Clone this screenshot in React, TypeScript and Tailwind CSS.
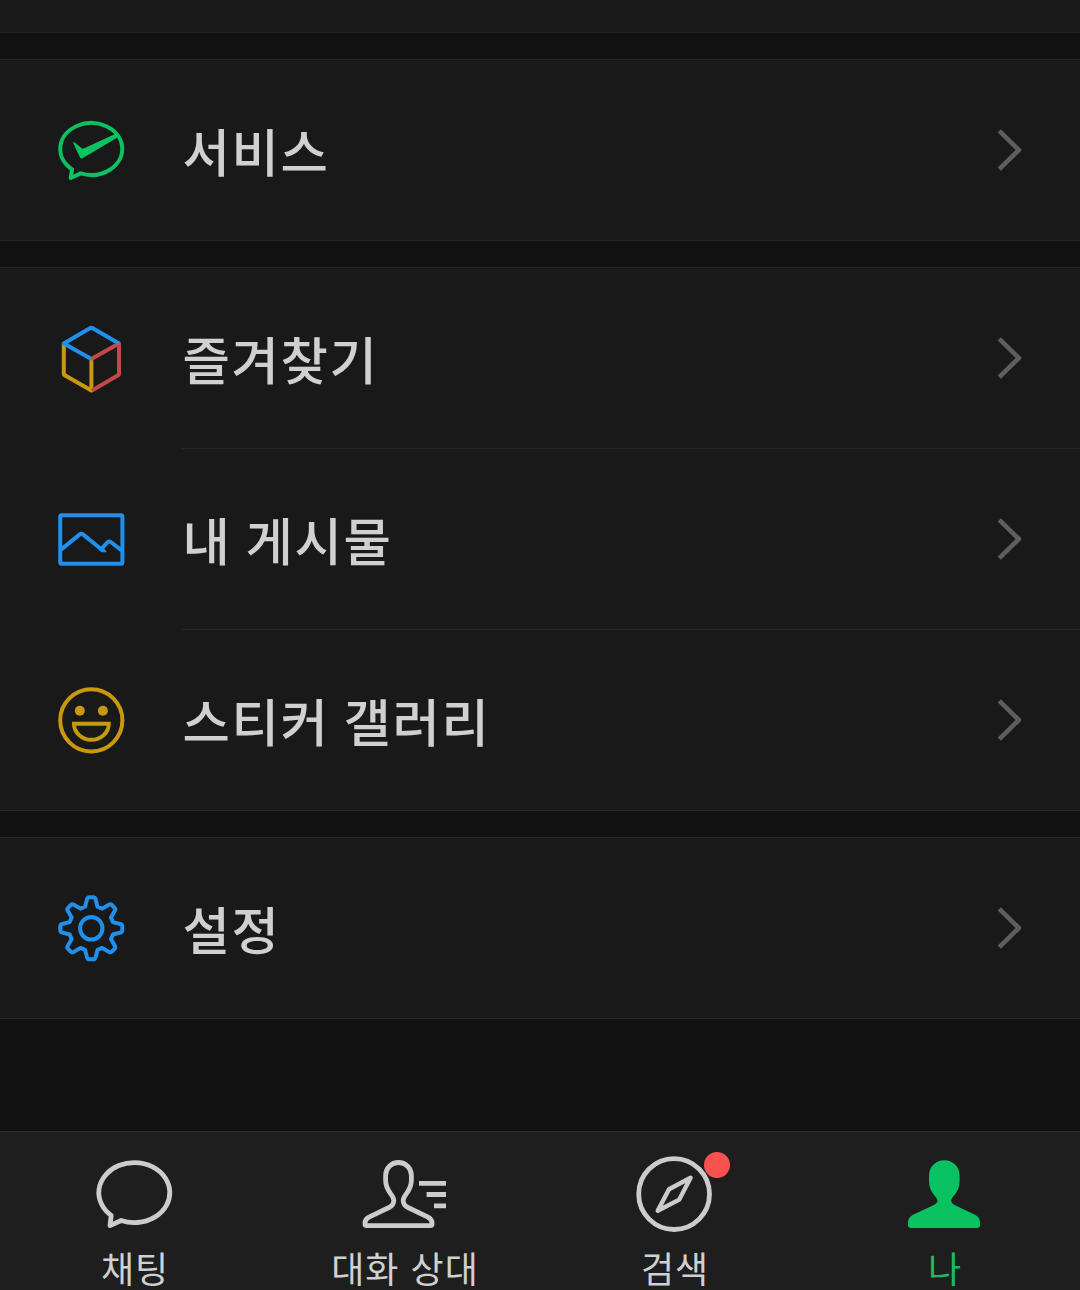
import type { ReactNode } from "react";

const GREEN = "#0ac261";
const BLUE = "#1f90ee";
const GOLD = "#c8990f";
const RED = "#c44846";
const LIGHT = "#cccccc";

// Eight identical teeth with rounded tips, rotated around the centre (36, 36).
const gearPath = (() => {
  let d = "";
  for (let i = 0; i < 8; i++) {
    const a = (i * Math.PI) / 4;
    const p = (x: number, y: number) =>
      `${(36 + x * Math.cos(a) - y * Math.sin(a)).toFixed(2)} ${(36 + x * Math.sin(a) + y * Math.cos(a)).toFixed(2)}`;
    d += `${i === 0 ? "M" : "L"}${p(-6.2, -21.6)}L${p(-4.3, -29)}Q${p(-3.8, -31)} ${p(-2, -31)}L${p(2, -31)}Q${p(3.8, -31)} ${p(4.3, -29)}L${p(6.2, -21.6)}`;
  }
  return `${d}Z`;
})();

function RowIcon({ viewBox, children }: { viewBox: string; children: ReactNode }) {
  return (
    <svg viewBox={viewBox} className="h-[72px] w-[72px] shrink-0" fill="none" strokeWidth={4} strokeLinejoin="round">
      {children}
    </svg>
  );
}

const ServiceIcon = (
  <RowIcon viewBox="56.3 114 72 72">
    <path d="M72.4 169.4A31 26 0 1 1 81 173.4L71 178Z" stroke={GREEN} />
    <path d="M73.3 142.6Q73.6 141.4 75 142.6L82.4 148.4Q83 148.8 84 148.4L117 133.2L119.5 136.6L83.2 158Q81.4 159 80.3 157.4Z" fill={GREEN} />
  </RowIcon>
);

const CubeIcon = (
  <RowIcon viewBox="56 322 72 72">
    <path d="M63.8 343.5V373.4Q63.8 374.6 64.8 375.2L91.4 390.6V359" stroke={GOLD} />
    <path d="M91.4 359L119 343.5V373.4Q119 374.6 118 375.2L91.9 390.6" stroke={RED} />
    <path d="M91.4 359L63.8 343.5L90.4 328Q91.4 327.4 92.4 328L119 343.5" stroke={BLUE} />
  </RowIcon>
);

const PhotoIcon = (
  <RowIcon viewBox="56 503 72 72">
    <rect x="60.2" y="515.2" width="62.2" height="48.6" rx="1.5" stroke={BLUE} />
    <path d="M61 549.6L79.8 534.4Q81.4 533.2 83 534.4L101.5 549.5" stroke={BLUE} />
    <path d="M101.4 549L107.7 542.2Q109.2 540.8 110.8 542L122 550.8" stroke={BLUE} />
    <path d="M98.2 549.2L103.5 547.6L106.6 551.8Q105 552.6 101.6 552.2Z" fill={BLUE} />
  </RowIcon>
);

const StickerIcon = (
  <RowIcon viewBox="56 684 72 72">
    <circle cx="91.3" cy="720.3" r="31.1" stroke={GOLD} />
    <circle cx="79.8" cy="710.7" r="5" fill={GOLD} />
    <circle cx="102.9" cy="710.7" r="5" fill={GOLD} />
    <path d="M74 723.8H108.8A17.4 16 0 0 1 74 723.8Z" stroke={GOLD} strokeLinejoin="miter" />
  </RowIcon>
);

const SettingsIcon = (
  <RowIcon viewBox="0.7 -0.3 72 72">
    <path d={gearPath} stroke={BLUE} />
    <circle cx="36" cy="36" r="11.2" stroke={BLUE} />
  </RowIcon>
);

function Row({ icon, label, divided = false }: { icon: ReactNode; label: string; divided?: boolean }) {
  return (
    <div>
      {divided && <div className="ml-[182px] h-px bg-[#262626]" />}
      <div className="flex h-[180px] items-center pr-14 pl-14">
        {icon}
        <span className="ml-[54.5px] flex-1 text-[51.5px] leading-[72px] font-medium tracking-[1.6px] text-[#d0d0d0] [word-spacing:-2px]">
          {label}
        </span>
        <svg viewBox="0 0 28 48" className="h-12 w-7" fill="none">
          <path d="M3.3 4.8L22.9 24L3.3 43.2" stroke="#5e5e5e" strokeWidth="4.6" strokeLinejoin="round" />
        </svg>
      </div>
    </div>
  );
}

function Section({ children }: { children: ReactNode }) {
  return <section className="mt-[26px] border-y border-[#262626] bg-[#191919]">{children}</section>;
}

function Tab({ viewBox, label, active = false, badge = false, children }: {
  viewBox: string;
  label: string;
  active?: boolean;
  badge?: boolean;
  children: ReactNode;
}) {
  return (
    <div className="flex flex-col items-center pt-[18px]">
      <div className="relative">
        <svg viewBox={viewBox} className="h-[84px] w-[100px]" fill="none" stroke={LIGHT} strokeWidth={4.8} strokeLinejoin="round">
          {children}
        </svg>
        {badge && <span className="absolute top-[2px] right-[-5px] h-[26px] w-[26px] rounded-full bg-[#fa5151]" />}
      </div>
      <span
        className={
          active
            ? "mt-[13px] text-[36px] leading-[40px] tracking-[1px] text-[#1fb865]"
            : "mt-[13px] text-[36px] leading-[40px] tracking-[1px] text-[#d0d0d0]"
        }
      >
        {label}
      </span>
    </div>
  );
}

export default function App() {
  return (
    <div lang="ko" className="flex h-[1290px] w-[1080px] flex-col overflow-hidden bg-[#111111] font-['Noto_Sans_CJK_KR',sans-serif]">
      <div className="h-[33px] shrink-0 border-b border-[#202020] bg-[#191919]" />
      <Section>
        <Row icon={ServiceIcon} label="서비스" />
      </Section>
      <Section>
        <Row icon={CubeIcon} label="즐겨찾기" />
        <Row icon={PhotoIcon} label="내 게시물" divided />
        <Row icon={StickerIcon} label="스티커 갤러리" divided />
      </Section>
      <Section>
        <Row icon={SettingsIcon} label="설정" />
      </Section>
      <nav className="mt-auto grid h-[159px] shrink-0 grid-cols-4 border-t border-[#2a2a2a] bg-[#1e1e1e]">
        <Tab viewBox="85.4 1150 100 84" label="채팅">
          <path d="M111.6 1215.4A35.5 30 0 1 1 121.6 1220.5L110.4 1225.6Z" />
        </Tab>
        <Tab viewBox="355 1150 100 84" label="대화 상대">
          <path d="M385.6 1175.4A12.9 12.9 0 0 1 411.4 1175.4V1180C411.4 1192 403.2 1194.5 403.2 1200.5C403.2 1204 405 1206 408 1207.5L428 1217.2Q432 1219.4 432 1223V1224Q432 1225.6 430.4 1225.6H366.6Q365 1225.6 365 1224V1223Q365 1219.4 369 1217.2L389 1207.5C392 1206 393.8 1204 393.8 1200.5C393.8 1194.5 385.6 1192 385.6 1180Z" />
          <path d="M419 1183.4H446M426.6 1194.5H446M434 1205.8H446" />
        </Tab>
        <Tab viewBox="625 1150 100 84" label="검색" badge>
          <circle cx="674.1" cy="1194.1" r="35.4" />
          <path d="M690.6 1177.7L669 1189.3L657.7 1210.8L679.3 1199.6Z" strokeWidth={4.4} />
        </Tab>
        <Tab viewBox="895 1150 100 84" label="나" active>
          <path
            d="M929 1175.4A15.3 15.3 0 0 1 959.6 1175.4V1181C959.6 1193.5 951.2 1196.5 951.2 1200.5C951.2 1202.5 952.5 1204 955 1205.2L975 1214.7Q980 1217.3 980 1222.5V1225Q980 1228 977 1228H911Q908 1228 908 1225V1222.5Q908 1217.3 913 1214.7L933.4 1205.2C936 1204 937.4 1202.5 937.4 1200.5C937.4 1196.5 929 1193.5 929 1181Z"
            fill={GREEN}
            stroke="none"
          />
        </Tab>
      </nav>
    </div>
  );
}
